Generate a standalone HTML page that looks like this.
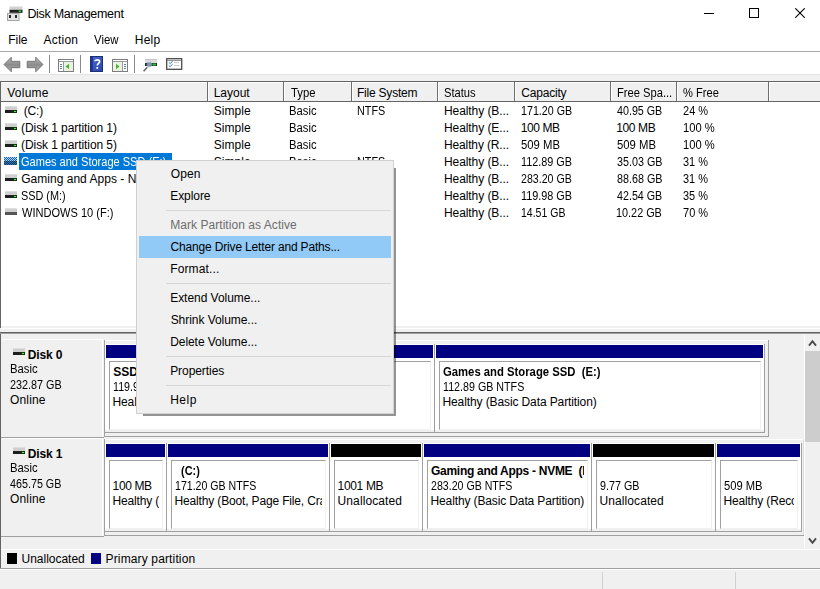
<!DOCTYPE html>
<html><head><meta charset="utf-8">
<style>
*{margin:0;padding:0;box-sizing:border-box}
html,body{width:820px;height:589px;overflow:hidden;background:#f0f0f0;font-family:"Liberation Sans",sans-serif;font-size:12px;color:#000;position:relative}
.a{position:absolute}
.t{position:absolute;white-space:nowrap;line-height:14px}
.hd{position:absolute;top:82px;height:19px;border-right:1px solid #a0a0a0}
.bar{position:absolute;height:13px;background:#000080}
.blk{background:#000}
.sep{position:absolute;left:166px;width:225px;height:1px;background:#d7d7d7}
</style></head><body>
<div class="a" style="left:0px;top:0px;width:820px;height:74px;background:#fff"></div>
<svg class="a" style="left:7px;top:6px" width="16" height="15" viewBox="0 0 16 15">
<rect x="2.5" y="0.5" width="13" height="3.5" fill="#d2d2d2"/>
<rect x="2.5" y="3.8" width="13" height="3" fill="#1f1f1f"/>
<rect x="11" y="4" width="3.5" height="2.6" fill="#0e4a12"/><rect x="11.8" y="4.6" width="2" height="1.4" fill="#52d452"/>
<rect x="0.5" y="7.5" width="11.5" height="7" fill="#e4e4e4" stroke="#a4a4a4"/>
<rect x="2" y="9" width="2" height="3" fill="#2a2a2a"/>
<rect x="8" y="9" width="2" height="3" fill="#2a2a2a"/>
</svg>
<div class="t" style="left:27.40px;top:7.07px;letter-spacing:-0.304px;font-size:12.5px">Disk Management</div>
<div class="a" style="left:704px;top:13px;width:10px;height:1px;background:#000"></div>
<div class="a" style="left:749px;top:8px;width:10px;height:10px;border:1px solid #000"></div>
<svg class="a" style="left:795px;top:8px" width="10" height="10" viewBox="0 0 10 10"><path d="M0.3 0.3L9.7 9.7M9.7 0.3L0.3 9.7" stroke="#000" stroke-width="1.1"/></svg>
<div class="t" style="left:8.30px;top:32.84px;letter-spacing:-0.067px">File</div>
<div class="t" style="left:43.45px;top:32.84px;letter-spacing:0.250px">Action</div>
<div class="t" style="left:94.25px;top:32.84px;transform:scaleX(0.9496);transform-origin:0 0">View</div>
<div class="t" style="left:134.80px;top:32.84px;letter-spacing:0.200px">Help</div>
<div class="a" style="left:0px;top:51px;width:820px;height:1px;background:#a8a8a8"></div>
<svg class="a" style="left:3px;top:56px" width="18" height="17" viewBox="3 56 18 17"><defs><linearGradient id="ag" x1="0" y1="0" x2="0" y2="1"><stop offset="0" stop-color="#bdbdbd"/><stop offset="0.5" stop-color="#8c8c8c"/><stop offset="1" stop-color="#b0b0b0"/></linearGradient></defs><path d="M4 64.5L11.3 57.2V61.3H19.8V67.7H11.3V71.8Z" fill="url(#ag)" stroke="#6e6e6e" stroke-width="0.9" stroke-linejoin="round"/></svg>
<svg class="a" style="left:26px;top:56px" width="18" height="17" viewBox="26 56 18 17"><path d="M43 64.5L35.7 57.2V61.3H27.2V67.7H35.7V71.8Z" fill="url(#ag)" stroke="#6e6e6e" stroke-width="0.9" stroke-linejoin="round"/></svg>
<div class="a" style="left:49px;top:55px;width:1px;height:18px;background:#8a8a8a"></div>
<svg class="a" style="left:57px;top:58px" width="18" height="15" viewBox="57 58 18 15">
<rect x="58.5" y="59.5" width="15" height="12" fill="#fff" stroke="#7d7d7d"/>
<rect x="59" y="61" width="14" height="1" fill="#9a9a9a"/>
<rect x="63" y="62" width="1" height="9" fill="#9a9a9a"/>
<rect x="64" y="62" width="9" height="9" fill="#e8f4e0"/>
<path d="M65.5 66.5L69 63.8V69.2Z" fill="#4caf3c"/>
<rect x="60" y="64" width="2" height="1" fill="#5a7aa8"/><rect x="60" y="66" width="2" height="1" fill="#5a7aa8"/><rect x="60" y="68" width="2" height="1" fill="#5a7aa8"/>
</svg>
<div class="a" style="left:80px;top:55px;width:1px;height:18px;background:#8a8a8a"></div>
<svg class="a" style="left:90px;top:56px" width="13" height="16" viewBox="0 0 13 16">
<defs><linearGradient id="hg" x1="0" y1="0" x2="1" y2="1"><stop offset="0" stop-color="#4a6ad0"/><stop offset="1" stop-color="#2a44a8"/></linearGradient></defs>
<rect x="0" y="0" width="13" height="16" fill="url(#hg)"/>
<rect x="0" y="0" width="3" height="16" fill="#23388f"/>
<rect x="0.5" y="0.5" width="12" height="15" fill="none" stroke="#1e2f7a"/>
<path d="M5 5.2C5 3.4 9.6 3.2 9.6 5.6C9.6 7.4 7.3 7.4 7.3 9.6" stroke="#fff" stroke-width="1.7" fill="none"/>
<rect x="6.4" y="11" width="1.8" height="1.8" fill="#fff"/>
</svg>
<svg class="a" style="left:111px;top:58px" width="18" height="15" viewBox="111 58 18 15">
<rect x="112.5" y="59.5" width="15" height="12" fill="#fff" stroke="#7d7d7d"/>
<rect x="113" y="61" width="14" height="1" fill="#9a9a9a"/>
<rect x="122" y="62" width="1" height="9" fill="#9a9a9a"/>
<rect x="113" y="62" width="9" height="9" fill="#e8f4e0"/>
<path d="M119.5 66.5L116 63.8V69.2Z" fill="#4caf3c"/>
<rect x="124" y="64" width="2" height="1" fill="#5a7aa8"/><rect x="124" y="66" width="2" height="1" fill="#5a7aa8"/><rect x="124" y="68" width="2" height="1" fill="#5a7aa8"/>
</svg>
<div class="a" style="left:134px;top:55px;width:1px;height:18px;background:#8a8a8a"></div>
<svg class="a" style="left:142px;top:57px" width="16" height="16" viewBox="142 57 16 16">
<rect x="145" y="59" width="12" height="4" fill="#dcdcdc"/>
<rect x="145" y="59" width="12" height="1" fill="#c4c4c4"/>
<rect x="145" y="63" width="12" height="3" fill="#1e2a22"/>
<rect x="152.5" y="63.5" width="3.5" height="2" fill="#3cb83c"/>
<circle cx="149.3" cy="64.6" r="2.4" fill="#a8c4dc" fill-opacity="0.7" stroke="#7a9ab8" stroke-width="0.7"/>
<path d="M143.6 71.2L147.3 67.2" stroke="#5a5a5a" stroke-width="1.3"/>
</svg>
<svg class="a" style="left:166px;top:58px" width="17" height="13" viewBox="166 58 17 13">
<rect x="166.7" y="58.7" width="15" height="10.6" fill="#fff" stroke="#4a4a4a" stroke-width="1.3"/>
<rect x="167" y="60" width="14.5" height="0.8" fill="#7a7a7a"/>
<path d="M168.8 62.4L170.2 63.6L172.4 61.2M168.8 65.4L170.2 66.6L172.4 64.2" stroke="#3a78c8" stroke-width="1" fill="none"/>
<rect x="174" y="62.3" width="5" height="0.8" fill="#b8b8b8"/><rect x="174" y="65.3" width="5" height="0.8" fill="#b8b8b8"/>
</svg>
<div class="a" style="left:0px;top:81px;width:820px;height:247px;background:#fff;border-top:1px solid #646464;border-left:1px solid #646464"></div>
<div class="a" style="left:1px;top:82px;width:819px;height:20px;background:#f0f0f0;border-bottom:1px solid #646464"></div>
<div class="a" style="left:1px;top:82px;width:819px;height:1px;background:#fff"></div>
<div class="a" style="left:0px;top:74px;width:820px;height:1px;background:#e3e3e3"></div>
<div class="a" style="left:207px;top:82px;width:1px;height:19px;background:#6e6e6e"></div>
<div class="a" style="left:208px;top:82px;width:1px;height:19px;background:#fff"></div>
<div class="a" style="left:283px;top:82px;width:1px;height:19px;background:#6e6e6e"></div>
<div class="a" style="left:284px;top:82px;width:1px;height:19px;background:#fff"></div>
<div class="a" style="left:351px;top:82px;width:1px;height:19px;background:#6e6e6e"></div>
<div class="a" style="left:352px;top:82px;width:1px;height:19px;background:#fff"></div>
<div class="a" style="left:437px;top:82px;width:1px;height:19px;background:#6e6e6e"></div>
<div class="a" style="left:438px;top:82px;width:1px;height:19px;background:#fff"></div>
<div class="a" style="left:514px;top:82px;width:1px;height:19px;background:#6e6e6e"></div>
<div class="a" style="left:515px;top:82px;width:1px;height:19px;background:#fff"></div>
<div class="a" style="left:610px;top:82px;width:1px;height:19px;background:#6e6e6e"></div>
<div class="a" style="left:611px;top:82px;width:1px;height:19px;background:#fff"></div>
<div class="a" style="left:676px;top:82px;width:1px;height:19px;background:#6e6e6e"></div>
<div class="a" style="left:677px;top:82px;width:1px;height:19px;background:#fff"></div>
<div class="a" style="left:768px;top:82px;width:1px;height:19px;background:#6e6e6e"></div>
<div class="a" style="left:769px;top:82px;width:1px;height:19px;background:#fff"></div>
<div class="t" style="left:7.25px;top:85.84px;letter-spacing:0.250px">Volume</div>
<div class="t" style="left:213.70px;top:85.84px;letter-spacing:-0.010px">Layout</div>
<div class="t" style="left:290.56px;top:85.84px;transform:scaleX(0.9426);transform-origin:0 0">Type</div>
<div class="t" style="left:357.00px;top:85.84px;letter-spacing:-0.220px">File System</div>
<div class="t" style="left:444.49px;top:85.84px;transform:scaleX(0.9303);transform-origin:0 0">Status</div>
<div class="t" style="left:521.20px;top:85.84px;letter-spacing:-0.179px">Capacity</div>
<div class="t" style="left:616.87px;top:85.84px;transform:scaleX(0.9302);transform-origin:0 0">Free Spa...</div>
<div class="t" style="left:682.63px;top:85.84px;transform:scaleX(0.9272);transform-origin:0 0">% Free</div>
<svg class="a" style="left:5px;top:106px" width="12" height="7" viewBox="0 0 12 7"><rect x="0" y="0" width="12" height="4" fill="#cfcfcf"/><rect x="0" y="0" width="12" height="1" fill="#dedede"/><rect x="0" y="4" width="12" height="3" fill="#1e1e1e"/><rect x="8" y="4" width="4" height="3" fill="#0b3a0b"/><rect x="9" y="5" width="2" height="1" fill="#5ee05e"/></svg>
<div class="t" style="left:23.75px;top:104.24px;letter-spacing:-0.167px">(C:)</div>
<div class="t" style="left:213.75px;top:104.24px;letter-spacing:0.040px">Simple</div>
<div class="t" style="left:289.46px;top:104.24px;transform:scaleX(0.9376);transform-origin:0 0">Basic</div>
<div class="t" style="left:357.30px;top:104.24px;transform:scaleX(0.8993);transform-origin:0 0">NTFS</div>
<div class="t" style="left:444.00px;top:104.24px;letter-spacing:-0.079px">Healthy (B...</div>
<div class="t" style="left:520.80px;top:104.24px;transform:scaleX(0.8899);transform-origin:0 0">171.20 GB</div>
<div class="t" style="left:616.98px;top:104.24px;transform:scaleX(0.8927);transform-origin:0 0">40.95 GB</div>
<div class="t" style="left:682.95px;top:104.24px;transform:scaleX(0.9184);transform-origin:0 0">24 %</div>
<svg class="a" style="left:5px;top:123px" width="12" height="7" viewBox="0 0 12 7"><rect x="0" y="0" width="12" height="4" fill="#cfcfcf"/><rect x="0" y="0" width="12" height="1" fill="#dedede"/><rect x="0" y="4" width="12" height="3" fill="#1e1e1e"/><rect x="8" y="4" width="4" height="3" fill="#0b3a0b"/><rect x="9" y="5" width="2" height="1" fill="#5ee05e"/></svg>
<div class="t" style="left:21.05px;top:121.24px;letter-spacing:-0.079px">(Disk 1 partition 1)</div>
<div class="t" style="left:213.75px;top:121.24px;letter-spacing:0.040px">Simple</div>
<div class="t" style="left:289.46px;top:121.24px;transform:scaleX(0.9376);transform-origin:0 0">Basic</div>
<div class="t" style="left:444.00px;top:121.24px;letter-spacing:-0.079px">Healthy (E...</div>
<div class="t" style="left:520.70px;top:121.24px;letter-spacing:-0.390px">100 MB</div>
<div class="t" style="left:616.30px;top:121.24px;letter-spacing:-0.390px">100 MB</div>
<div class="t" style="left:682.66px;top:121.24px;transform:scaleX(0.9327);transform-origin:0 0">100 %</div>
<svg class="a" style="left:5px;top:140px" width="12" height="7" viewBox="0 0 12 7"><rect x="0" y="0" width="12" height="4" fill="#cfcfcf"/><rect x="0" y="0" width="12" height="1" fill="#dedede"/><rect x="0" y="4" width="12" height="3" fill="#1e1e1e"/><rect x="8" y="4" width="4" height="3" fill="#0b3a0b"/><rect x="9" y="5" width="2" height="1" fill="#5ee05e"/></svg>
<div class="t" style="left:21.05px;top:138.24px;letter-spacing:-0.079px">(Disk 1 partition 5)</div>
<div class="t" style="left:213.75px;top:138.24px;letter-spacing:0.040px">Simple</div>
<div class="t" style="left:289.46px;top:138.24px;transform:scaleX(0.9376);transform-origin:0 0">Basic</div>
<div class="t" style="left:444.00px;top:138.24px;letter-spacing:-0.133px">Healthy (R...</div>
<div class="t" style="left:521.13px;top:138.24px;transform:scaleX(0.9416);transform-origin:0 0">509 MB</div>
<div class="t" style="left:616.73px;top:138.24px;transform:scaleX(0.9416);transform-origin:0 0">509 MB</div>
<div class="t" style="left:682.66px;top:138.24px;transform:scaleX(0.9327);transform-origin:0 0">100 %</div>
<svg class="a" style="left:4px;top:157px" width="13" height="8" viewBox="0 0 13 8"><rect x="0" y="0" width="1" height="1" fill="#1f5fa8"/><rect x="1" y="0" width="1" height="1" fill="#a8d4fa"/><rect x="2" y="0" width="1" height="1" fill="#1f5fa8"/><rect x="3" y="0" width="1" height="1" fill="#a8d4fa"/><rect x="4" y="0" width="1" height="1" fill="#1f5fa8"/><rect x="5" y="0" width="1" height="1" fill="#a8d4fa"/><rect x="6" y="0" width="1" height="1" fill="#1f5fa8"/><rect x="7" y="0" width="1" height="1" fill="#a8d4fa"/><rect x="8" y="0" width="1" height="1" fill="#1f5fa8"/><rect x="9" y="0" width="1" height="1" fill="#a8d4fa"/><rect x="10" y="0" width="1" height="1" fill="#1f5fa8"/><rect x="11" y="0" width="1" height="1" fill="#a8d4fa"/><rect x="12" y="0" width="1" height="1" fill="#1f5fa8"/><rect x="0" y="1" width="1" height="1" fill="#a8d4fa"/><rect x="1" y="1" width="1" height="1" fill="#1f5fa8"/><rect x="2" y="1" width="1" height="1" fill="#a8d4fa"/><rect x="3" y="1" width="1" height="1" fill="#1f5fa8"/><rect x="4" y="1" width="1" height="1" fill="#a8d4fa"/><rect x="5" y="1" width="1" height="1" fill="#1f5fa8"/><rect x="6" y="1" width="1" height="1" fill="#a8d4fa"/><rect x="7" y="1" width="1" height="1" fill="#1f5fa8"/><rect x="8" y="1" width="1" height="1" fill="#a8d4fa"/><rect x="9" y="1" width="1" height="1" fill="#1f5fa8"/><rect x="10" y="1" width="1" height="1" fill="#a8d4fa"/><rect x="11" y="1" width="1" height="1" fill="#1f5fa8"/><rect x="12" y="1" width="1" height="1" fill="#a8d4fa"/><rect x="0" y="2" width="1" height="1" fill="#1f5fa8"/><rect x="1" y="2" width="1" height="1" fill="#a8d4fa"/><rect x="2" y="2" width="1" height="1" fill="#1f5fa8"/><rect x="3" y="2" width="1" height="1" fill="#a8d4fa"/><rect x="4" y="2" width="1" height="1" fill="#1f5fa8"/><rect x="5" y="2" width="1" height="1" fill="#a8d4fa"/><rect x="6" y="2" width="1" height="1" fill="#1f5fa8"/><rect x="7" y="2" width="1" height="1" fill="#a8d4fa"/><rect x="8" y="2" width="1" height="1" fill="#1f5fa8"/><rect x="9" y="2" width="1" height="1" fill="#a8d4fa"/><rect x="10" y="2" width="1" height="1" fill="#1f5fa8"/><rect x="11" y="2" width="1" height="1" fill="#a8d4fa"/><rect x="12" y="2" width="1" height="1" fill="#1f5fa8"/><rect x="0" y="3" width="1" height="1" fill="#a8d4fa"/><rect x="1" y="3" width="1" height="1" fill="#1f5fa8"/><rect x="2" y="3" width="1" height="1" fill="#a8d4fa"/><rect x="3" y="3" width="1" height="1" fill="#1f5fa8"/><rect x="4" y="3" width="1" height="1" fill="#a8d4fa"/><rect x="5" y="3" width="1" height="1" fill="#1f5fa8"/><rect x="6" y="3" width="1" height="1" fill="#a8d4fa"/><rect x="7" y="3" width="1" height="1" fill="#1f5fa8"/><rect x="8" y="3" width="1" height="1" fill="#a8d4fa"/><rect x="9" y="3" width="1" height="1" fill="#1f5fa8"/><rect x="10" y="3" width="1" height="1" fill="#a8d4fa"/><rect x="11" y="3" width="1" height="1" fill="#1f5fa8"/><rect x="12" y="3" width="1" height="1" fill="#a8d4fa"/><rect x="0" y="4" width="1" height="1" fill="#0a3564"/><rect x="1" y="4" width="1" height="1" fill="#3a78b8"/><rect x="2" y="4" width="1" height="1" fill="#0a3564"/><rect x="3" y="4" width="1" height="1" fill="#3a78b8"/><rect x="4" y="4" width="1" height="1" fill="#0a3564"/><rect x="5" y="4" width="1" height="1" fill="#3a78b8"/><rect x="6" y="4" width="1" height="1" fill="#0a3564"/><rect x="7" y="4" width="1" height="1" fill="#3a78b8"/><rect x="8" y="4" width="1" height="1" fill="#0a3564"/><rect x="9" y="4" width="1" height="1" fill="#2a7a8a"/><rect x="10" y="4" width="1" height="1" fill="#0a3564"/><rect x="11" y="4" width="1" height="1" fill="#2a7a8a"/><rect x="12" y="4" width="1" height="1" fill="#0a3564"/><rect x="0" y="5" width="1" height="1" fill="#3a78b8"/><rect x="1" y="5" width="1" height="1" fill="#0a3564"/><rect x="2" y="5" width="1" height="1" fill="#3a78b8"/><rect x="3" y="5" width="1" height="1" fill="#0a3564"/><rect x="4" y="5" width="1" height="1" fill="#3a78b8"/><rect x="5" y="5" width="1" height="1" fill="#0a3564"/><rect x="6" y="5" width="1" height="1" fill="#3a78b8"/><rect x="7" y="5" width="1" height="1" fill="#0a3564"/><rect x="8" y="5" width="1" height="1" fill="#3a78b8"/><rect x="9" y="5" width="1" height="1" fill="#0a3564"/><rect x="10" y="5" width="1" height="1" fill="#2a7a8a"/><rect x="11" y="5" width="1" height="1" fill="#0a3564"/><rect x="12" y="5" width="1" height="1" fill="#2a7a8a"/><rect x="0" y="6" width="1" height="1" fill="#0a3564"/><rect x="1" y="6" width="1" height="1" fill="#3a78b8"/><rect x="2" y="6" width="1" height="1" fill="#0a3564"/><rect x="3" y="6" width="1" height="1" fill="#3a78b8"/><rect x="4" y="6" width="1" height="1" fill="#0a3564"/><rect x="5" y="6" width="1" height="1" fill="#3a78b8"/><rect x="6" y="6" width="1" height="1" fill="#0a3564"/><rect x="7" y="6" width="1" height="1" fill="#3a78b8"/><rect x="8" y="6" width="1" height="1" fill="#0a3564"/><rect x="9" y="6" width="1" height="1" fill="#2a7a8a"/><rect x="10" y="6" width="1" height="1" fill="#0a3564"/><rect x="11" y="6" width="1" height="1" fill="#2a7a8a"/><rect x="12" y="6" width="1" height="1" fill="#0a3564"/><rect x="0" y="7" width="1" height="1" fill="#3a78b8"/><rect x="1" y="7" width="1" height="1" fill="#0a3564"/><rect x="2" y="7" width="1" height="1" fill="#3a78b8"/><rect x="3" y="7" width="1" height="1" fill="#0a3564"/><rect x="4" y="7" width="1" height="1" fill="#3a78b8"/><rect x="5" y="7" width="1" height="1" fill="#0a3564"/><rect x="6" y="7" width="1" height="1" fill="#3a78b8"/><rect x="7" y="7" width="1" height="1" fill="#0a3564"/><rect x="8" y="7" width="1" height="1" fill="#3a78b8"/><rect x="9" y="7" width="1" height="1" fill="#0a3564"/><rect x="10" y="7" width="1" height="1" fill="#2a7a8a"/><rect x="11" y="7" width="1" height="1" fill="#0a3564"/><rect x="12" y="7" width="1" height="1" fill="#2a7a8a"/></svg>
<div class="a" style="left:19px;top:153px;width:153px;height:17px;background:#0078d7"></div>
<div class="t" style="left:21.25px;top:155.24px;transform:scaleX(0.9187);transform-origin:0 0;color:#fff">Games and Storage SSD (E:)</div>
<div class="t" style="left:213.75px;top:155.24px;letter-spacing:0.040px">Simple</div>
<div class="t" style="left:289.46px;top:155.24px;transform:scaleX(0.9376);transform-origin:0 0">Basic</div>
<div class="t" style="left:357.30px;top:155.24px;transform:scaleX(0.8993);transform-origin:0 0">NTFS</div>
<div class="t" style="left:444.00px;top:155.24px;letter-spacing:-0.079px">Healthy (B...</div>
<div class="t" style="left:520.79px;top:155.24px;transform:scaleX(0.9036);transform-origin:0 0">112.89 GB</div>
<div class="t" style="left:616.80px;top:155.24px;transform:scaleX(0.8963);transform-origin:0 0">35.03 GB</div>
<div class="t" style="left:683.09px;top:155.24px;transform:scaleX(0.9132);transform-origin:0 0">31 %</div>
<svg class="a" style="left:5px;top:174px" width="12" height="7" viewBox="0 0 12 7"><rect x="0" y="0" width="12" height="4" fill="#cfcfcf"/><rect x="0" y="0" width="12" height="1" fill="#dedede"/><rect x="0" y="4" width="12" height="3" fill="#1e1e1e"/><rect x="8" y="4" width="4" height="3" fill="#0b3a0b"/><rect x="9" y="5" width="2" height="1" fill="#5ee05e"/></svg>
<div class="t" style="left:21.20px;top:172.24px;letter-spacing:0.026px">Gaming and Apps - NVME (I:)</div>
<div class="t" style="left:213.75px;top:172.24px;letter-spacing:0.040px">Simple</div>
<div class="t" style="left:289.46px;top:172.24px;transform:scaleX(0.9376);transform-origin:0 0">Basic</div>
<div class="t" style="left:357.30px;top:172.24px;transform:scaleX(0.8993);transform-origin:0 0">NTFS</div>
<div class="t" style="left:444.00px;top:172.24px;letter-spacing:-0.079px">Healthy (B...</div>
<div class="t" style="left:521.07px;top:172.24px;transform:scaleX(0.8851);transform-origin:0 0">283.20 GB</div>
<div class="t" style="left:616.75px;top:172.24px;transform:scaleX(0.8972);transform-origin:0 0">88.68 GB</div>
<div class="t" style="left:683.09px;top:172.24px;transform:scaleX(0.9132);transform-origin:0 0">31 %</div>
<svg class="a" style="left:5px;top:191px" width="12" height="7" viewBox="0 0 12 7"><rect x="0" y="0" width="12" height="4" fill="#cfcfcf"/><rect x="0" y="0" width="12" height="1" fill="#dedede"/><rect x="0" y="4" width="12" height="3" fill="#1e1e1e"/><rect x="8" y="4" width="4" height="3" fill="#0b3a0b"/><rect x="9" y="5" width="2" height="1" fill="#5ee05e"/></svg>
<div class="t" style="left:21.30px;top:189.24px;transform:scaleX(0.9053);transform-origin:0 0">SSD (M:)</div>
<div class="t" style="left:213.75px;top:189.24px;letter-spacing:0.040px">Simple</div>
<div class="t" style="left:289.46px;top:189.24px;transform:scaleX(0.9376);transform-origin:0 0">Basic</div>
<div class="t" style="left:357.30px;top:189.24px;transform:scaleX(0.8993);transform-origin:0 0">NTFS</div>
<div class="t" style="left:444.00px;top:189.24px;letter-spacing:-0.079px">Healthy (B...</div>
<div class="t" style="left:520.79px;top:189.24px;transform:scaleX(0.9036);transform-origin:0 0">119.98 GB</div>
<div class="t" style="left:616.98px;top:189.24px;transform:scaleX(0.8927);transform-origin:0 0">42.54 GB</div>
<div class="t" style="left:683.09px;top:189.24px;transform:scaleX(0.9132);transform-origin:0 0">35 %</div>
<svg class="a" style="left:5px;top:208px" width="12" height="7" viewBox="0 0 12 7"><rect x="0" y="0" width="12" height="4" fill="#cfcfcf"/><rect x="0" y="0" width="12" height="1" fill="#dedede"/><rect x="0" y="4" width="12" height="3" fill="#555555"/></svg>
<div class="t" style="left:21.75px;top:206.24px;transform:scaleX(0.9214);transform-origin:0 0">WINDOWS 10 (F:)</div>
<div class="t" style="left:213.75px;top:206.24px;letter-spacing:0.040px">Simple</div>
<div class="t" style="left:289.46px;top:206.24px;transform:scaleX(0.9376);transform-origin:0 0">Basic</div>
<div class="t" style="left:357.30px;top:206.24px;transform:scaleX(0.8993);transform-origin:0 0">NTFS</div>
<div class="t" style="left:444.00px;top:206.24px;letter-spacing:-0.079px">Healthy (B...</div>
<div class="t" style="left:520.81px;top:206.24px;transform:scaleX(0.8760);transform-origin:0 0">14.51 GB</div>
<div class="t" style="left:616.39px;top:206.24px;transform:scaleX(0.9045);transform-origin:0 0">10.22 GB</div>
<div class="t" style="left:682.95px;top:206.24px;transform:scaleX(0.9184);transform-origin:0 0">70 %</div>
<div class="a" style="left:1px;top:326px;width:819px;height:2px;background:#f0f0f0"></div>
<div class="a" style="left:1px;top:328px;width:819px;height:1px;background:#ffffff"></div>
<div class="a" style="left:1px;top:329px;width:819px;height:3px;background:#f0f0f0"></div>
<div class="a" style="left:0px;top:332px;width:820px;height:1px;background:#646464"></div>
<div class="a" style="left:0px;top:333px;width:820px;height:1px;background:#a0a0a0"></div>
<div class="a" style="left:0px;top:334px;width:1px;height:235px;background:#646464"></div>
<div class="a" style="left:805px;top:334px;width:15px;height:214px;background:#f0f0f0"></div>
<div class="a" style="left:805px;top:351px;width:15px;height:91px;background:#cdcdcd"></div>
<div class="a" style="left:804px;top:335px;width:1px;height:213px;background:#fff"></div>
<svg class="a" style="left:805px;top:334px" width="15" height="16" viewBox="805 334 15 16"><path d="M809 345.6L812.5 341.2L816 345.6" stroke="#4a4a4a" stroke-width="1.9" fill="none"/></svg>
<svg class="a" style="left:805px;top:532px" width="15" height="16" viewBox="805 532 15 16"><path d="M809 538.4L812.5 542.8L816 538.4" stroke="#4a4a4a" stroke-width="1.9" fill="none"/></svg>
<div class="a" style="left:2px;top:339px;width:101px;height:98px;background:#f0f0f0;border-top:1px solid #fff"></div>
<div class="a" style="left:102px;top:340px;width:1px;height:97px;background:#fff"></div>
<div class="a" style="left:1px;top:437px;width:103px;height:1px;background:#a0a0a0"></div>
<svg class="a" style="left:13px;top:348px" width="12" height="7" viewBox="0 0 12 7"><rect x="0" y="0" width="12" height="4" fill="#cfcfcf"/><rect x="0" y="0" width="12" height="1" fill="#dedede"/><rect x="0" y="4" width="12" height="3" fill="#1e1e1e"/><rect x="8" y="4" width="4" height="3" fill="#0b3a0b"/><rect x="9" y="5" width="2" height="1" fill="#5ee05e"/></svg>
<div class="t" style="left:27.80px;top:347.64px;letter-spacing:-0.140px;font-weight:bold">Disk 0</div>
<div class="t" style="left:9.56px;top:362.34px;transform:scaleX(0.9412);transform-origin:0 0">Basic</div>
<div class="t" style="left:9.96px;top:377.84px;transform:scaleX(0.9012);transform-origin:0 0">232.87 GB</div>
<div class="t" style="left:9.95px;top:392.54px;letter-spacing:0.180px">Online</div>
<div class="a" style="left:105px;top:340px;width:663px;height:96px;background:#f0f0f0"></div>
<div class="a" style="left:105px;top:340px;width:663px;height:1px;background:#fff"></div>
<div class="a" style="left:104px;top:340px;width:1px;height:97px;background:#a0a0a0"></div>
<div class="a" style="left:768px;top:340px;width:1px;height:96px;background:#a0a0a0"></div>
<div class="a" style="left:104px;top:436px;width:665px;height:1px;background:#a0a0a0"></div>
<div class="a" style="left:105px;top:344px;width:329px;height:86px;background:#fff"></div>
<div class="a" style="left:434px;top:344px;width:1px;height:89px;background:#a0a0a0"></div>
<div class="a" style="left:105px;top:432px;width:330px;height:1px;background:#a0a0a0"></div>
<div class="a" style="left:106px;top:345px;width:327px;height:13px;background:#000080"></div>
<div class="a" style="left:109px;top:361px;width:322px;height:69px;background:#fff;border:1px solid #a0a0a0;border-right-color:#f0f0f0;border-bottom-color:#f0f0f0"></div>
<div class="a" style="left:109.50px;top:362.84px;width:317.5px;height:18px;overflow:hidden"><div class="t" style="left:3.65px;top:2px;font-weight:bold">SSD</div></div>
<div class="a" style="left:109.50px;top:377.64px;width:317.5px;height:18px;overflow:hidden"><div class="t" style="left:3.20px;top:2px;transform:scaleX(0.8919);transform-origin:0 0">119.98 GB NTFS</div></div>
<div class="a" style="left:109.50px;top:392.84px;width:317.5px;height:18px;overflow:hidden"><div class="t" style="left:3.00px;top:2px;letter-spacing:-0.109px">Healthy (Basic Data Partition)</div></div>
<div class="a" style="left:435px;top:344px;width:329px;height:86px;background:#fff"></div>
<div class="a" style="left:764px;top:344px;width:1px;height:89px;background:#a0a0a0"></div>
<div class="a" style="left:435px;top:432px;width:330px;height:1px;background:#a0a0a0"></div>
<div class="a" style="left:436px;top:345px;width:327px;height:13px;background:#000080"></div>
<div class="a" style="left:439px;top:361px;width:322px;height:69px;background:#fff;border:1px solid #a0a0a0;border-right-color:#f0f0f0;border-bottom-color:#f0f0f0"></div>
<div class="a" style="left:439.50px;top:362.84px;width:317.5px;height:18px;overflow:hidden"><div class="t" style="left:3.53px;top:2px;transform:scaleX(0.9411);transform-origin:0 0;font-weight:bold">Games and Storage SSD&nbsp; (E:)</div></div>
<div class="a" style="left:439.50px;top:377.64px;width:317.5px;height:18px;overflow:hidden"><div class="t" style="left:3.20px;top:2px;transform:scaleX(0.8919);transform-origin:0 0">112.89 GB NTFS</div></div>
<div class="a" style="left:439.50px;top:392.84px;width:317.5px;height:18px;overflow:hidden"><div class="t" style="left:3.00px;top:2px;letter-spacing:-0.109px">Healthy (Basic Data Partition)</div></div>
<div class="a" style="left:2px;top:438px;width:101px;height:98px;background:#f0f0f0;border-top:1px solid #fff"></div>
<div class="a" style="left:102px;top:439px;width:1px;height:97px;background:#fff"></div>
<div class="a" style="left:1px;top:536px;width:103px;height:1px;background:#a0a0a0"></div>
<svg class="a" style="left:13px;top:447px" width="12" height="7" viewBox="0 0 12 7"><rect x="0" y="0" width="12" height="4" fill="#cfcfcf"/><rect x="0" y="0" width="12" height="1" fill="#dedede"/><rect x="0" y="4" width="12" height="3" fill="#1e1e1e"/><rect x="8" y="4" width="4" height="3" fill="#0b3a0b"/><rect x="9" y="5" width="2" height="1" fill="#5ee05e"/></svg>
<div class="t" style="left:27.80px;top:446.64px;letter-spacing:-0.170px;font-weight:bold">Disk 1</div>
<div class="t" style="left:9.56px;top:461.34px;transform:scaleX(0.9412);transform-origin:0 0">Basic</div>
<div class="t" style="left:10.28px;top:476.84px;transform:scaleX(0.8956);transform-origin:0 0">465.75 GB</div>
<div class="t" style="left:9.95px;top:491.54px;letter-spacing:0.180px">Online</div>
<div class="a" style="left:105px;top:439px;width:698px;height:96px;background:#f0f0f0"></div>
<div class="a" style="left:105px;top:439px;width:698px;height:1px;background:#fff"></div>
<div class="a" style="left:104px;top:439px;width:1px;height:97px;background:#a0a0a0"></div>
<div class="a" style="left:803px;top:439px;width:1px;height:96px;background:#dcdcdc"></div>
<div class="a" style="left:104px;top:535px;width:700px;height:1px;background:#a0a0a0"></div>
<div class="a" style="left:105px;top:443px;width:61px;height:86px;background:#fff"></div>
<div class="a" style="left:166px;top:443px;width:1px;height:89px;background:#a0a0a0"></div>
<div class="a" style="left:105px;top:531px;width:62px;height:1px;background:#a0a0a0"></div>
<div class="a" style="left:106px;top:444px;width:59px;height:13px;background:#000080"></div>
<div class="a" style="left:109px;top:460px;width:54px;height:69px;background:#fff;border:1px solid #a0a0a0;border-right-color:#f0f0f0;border-bottom-color:#f0f0f0"></div>
<div class="a" style="left:109.50px;top:476.64px;width:49.5px;height:18px;overflow:hidden"><div class="t" style="left:3.10px;top:2px;letter-spacing:-0.390px">100 MB</div></div>
<div class="a" style="left:109.50px;top:491.84px;width:49.5px;height:18px;overflow:hidden"><div class="t" style="left:3.00px;top:2px;letter-spacing:-0.154px">Healthy (EFI System Partition)</div></div>
<div class="a" style="left:167px;top:443px;width:162px;height:86px;background:#fff"></div>
<div class="a" style="left:329px;top:443px;width:1px;height:89px;background:#a0a0a0"></div>
<div class="a" style="left:167px;top:531px;width:163px;height:1px;background:#a0a0a0"></div>
<div class="a" style="left:168px;top:444px;width:160px;height:13px;background:#000080"></div>
<div class="a" style="left:171px;top:460px;width:155px;height:69px;background:#fff;border:1px solid #a0a0a0;border-right-color:#f0f0f0;border-bottom-color:#f0f0f0"></div>
<div class="a" style="left:177.10px;top:461.84px;width:144.9px;height:18px;overflow:hidden"><div class="t" style="left:3.45px;top:2px;transform:scaleX(0.9100);transform-origin:0 0;font-weight:bold">(C:)</div></div>
<div class="a" style="left:171.50px;top:476.64px;width:150.5px;height:18px;overflow:hidden"><div class="t" style="left:3.21px;top:2px;transform:scaleX(0.8830);transform-origin:0 0">171.20 GB NTFS</div></div>
<div class="a" style="left:171.50px;top:491.84px;width:150.5px;height:18px;overflow:hidden"><div class="t" style="left:3.00px;top:2px;letter-spacing:-0.154px">Healthy (Boot, Page File, Crash Dump, Basic Data Partition)</div></div>
<div class="a" style="left:330px;top:443px;width:92px;height:86px;background:#fff"></div>
<div class="a" style="left:422px;top:443px;width:1px;height:89px;background:#a0a0a0"></div>
<div class="a" style="left:330px;top:531px;width:93px;height:1px;background:#a0a0a0"></div>
<div class="a" style="left:331px;top:444px;width:90px;height:13px;background:#000"></div>
<div class="a" style="left:334px;top:460px;width:85px;height:69px;background:#fff;border:1px solid #a0a0a0;border-right-color:#f0f0f0;border-bottom-color:#f0f0f0"></div>
<div class="a" style="left:334.50px;top:476.64px;width:80.5px;height:18px;overflow:hidden"><div class="t" style="left:3.10px;top:2px;letter-spacing:-0.342px">1001 MB</div></div>
<div class="a" style="left:334.50px;top:491.84px;width:80.5px;height:18px;overflow:hidden"><div class="t" style="left:3.10px;top:2px;letter-spacing:0.090px">Unallocated</div></div>
<div class="a" style="left:423px;top:443px;width:168px;height:86px;background:#fff"></div>
<div class="a" style="left:591px;top:443px;width:1px;height:89px;background:#a0a0a0"></div>
<div class="a" style="left:423px;top:531px;width:169px;height:1px;background:#a0a0a0"></div>
<div class="a" style="left:424px;top:444px;width:166px;height:13px;background:#000080"></div>
<div class="a" style="left:427px;top:460px;width:161px;height:69px;background:#fff;border:1px solid #a0a0a0;border-right-color:#f0f0f0;border-bottom-color:#f0f0f0"></div>
<div class="a" style="left:427.50px;top:461.84px;width:156.5px;height:18px;overflow:hidden"><div class="t" style="left:3.50px;top:2px;letter-spacing:-0.284px;font-weight:bold">Gaming and Apps - NVME&nbsp; (I:)</div></div>
<div class="a" style="left:427.50px;top:476.64px;width:156.5px;height:18px;overflow:hidden"><div class="t" style="left:3.47px;top:2px;transform:scaleX(0.8845);transform-origin:0 0">283.20 GB NTFS</div></div>
<div class="a" style="left:427.50px;top:491.84px;width:156.5px;height:18px;overflow:hidden"><div class="t" style="left:3.00px;top:2px;letter-spacing:-0.126px">Healthy (Basic Data Partition)</div></div>
<div class="a" style="left:592px;top:443px;width:123px;height:86px;background:#fff"></div>
<div class="a" style="left:715px;top:443px;width:1px;height:89px;background:#a0a0a0"></div>
<div class="a" style="left:592px;top:531px;width:124px;height:1px;background:#a0a0a0"></div>
<div class="a" style="left:593px;top:444px;width:121px;height:13px;background:#000"></div>
<div class="a" style="left:596px;top:460px;width:116px;height:69px;background:#fff;border:1px solid #a0a0a0;border-right-color:#f0f0f0;border-bottom-color:#f0f0f0"></div>
<div class="a" style="left:596.50px;top:476.64px;width:111.5px;height:18px;overflow:hidden"><div class="t" style="left:3.51px;top:2px;transform:scaleX(0.8951);transform-origin:0 0">9.77 GB</div></div>
<div class="a" style="left:596.50px;top:491.84px;width:111.5px;height:18px;overflow:hidden"><div class="t" style="left:3.10px;top:2px;letter-spacing:0.080px">Unallocated</div></div>
<div class="a" style="left:716px;top:443px;width:85px;height:86px;background:#fff"></div>
<div class="a" style="left:801px;top:443px;width:1px;height:89px;background:#a0a0a0"></div>
<div class="a" style="left:716px;top:531px;width:86px;height:1px;background:#a0a0a0"></div>
<div class="a" style="left:717px;top:444px;width:83px;height:13px;background:#000080"></div>
<div class="a" style="left:720px;top:460px;width:78px;height:69px;background:#fff;border:1px solid #a0a0a0;border-right-color:#f0f0f0;border-bottom-color:#f0f0f0"></div>
<div class="a" style="left:720.50px;top:476.64px;width:73.5px;height:18px;overflow:hidden"><div class="t" style="left:3.53px;top:2px;transform:scaleX(0.9317);transform-origin:0 0">509 MB</div></div>
<div class="a" style="left:720.50px;top:491.84px;width:73.5px;height:18px;overflow:hidden"><div class="t" style="left:3.00px;top:2px;letter-spacing:-0.154px">Healthy (Recovery Partition)</div></div>
<div class="a" style="left:1px;top:549px;width:819px;height:1px;background:#ffffff"></div>
<div class="a" style="left:1px;top:550px;width:819px;height:18px;background:#f0f0f0"></div>
<div class="a" style="left:0px;top:568px;width:820px;height:1px;background:#a0a0a0"></div>
<div class="a" style="left:0px;top:569px;width:820px;height:1px;background:#ffffff"></div>
<div class="a" style="left:7px;top:553px;width:10px;height:11px;background:#000"></div>
<div class="t" style="left:21.50px;top:551.84px;letter-spacing:-0.010px">Unallocated</div>
<div class="a" style="left:91px;top:553px;width:10px;height:11px;background:#000080"></div>
<div class="t" style="left:105.60px;top:551.84px;letter-spacing:0.138px">Primary partition</div>
<div class="a" style="left:602px;top:572px;width:1px;height:17px;background:#d0d0d0"></div>
<div class="a" style="left:735px;top:572px;width:1px;height:17px;background:#d0d0d0"></div>
<div class="a" style="left:143px;top:168px;width:253px;height:248px;background:rgba(0,0,0,0.42);filter:blur(0.7px)"></div>
<div class="a" style="left:136px;top:160px;width:258px;height:254px;background:#f0f0f0;border:1px solid #d0d0d0"></div>
<div class="a" style="left:139px;top:236px;width:252px;height:22px;background:#91c9f7"></div>
<div class="t" style="left:170.65px;top:166.84px;letter-spacing:0.183px">Open</div>
<div class="t" style="left:170.20px;top:188.84px;letter-spacing:-0.058px">Explore</div>
<div class="t" style="left:170.20px;top:217.84px;letter-spacing:0.050px;color:#6d6d6d">Mark Partition as Active</div>
<div class="t" style="left:170.60px;top:239.84px;letter-spacing:-0.171px">Change Drive Letter and Paths...</div>
<div class="t" style="left:170.20px;top:261.84px;letter-spacing:0.138px">Format...</div>
<div class="t" style="left:170.20px;top:290.84px;letter-spacing:-0.043px">Extend Volume...</div>
<div class="t" style="left:170.65px;top:312.84px;letter-spacing:-0.050px">Shrink Volume...</div>
<div class="t" style="left:170.20px;top:334.84px;letter-spacing:-0.063px">Delete Volume...</div>
<div class="t" style="left:170.20px;top:363.84px;letter-spacing:-0.072px">Properties</div>
<div class="t" style="left:170.20px;top:392.84px;letter-spacing:0.500px">Help</div>
<div class="sep" style="top:210px"></div>
<div class="sep" style="top:283px"></div>
<div class="sep" style="top:356px"></div>
<div class="sep" style="top:385px"></div>
</body></html>
